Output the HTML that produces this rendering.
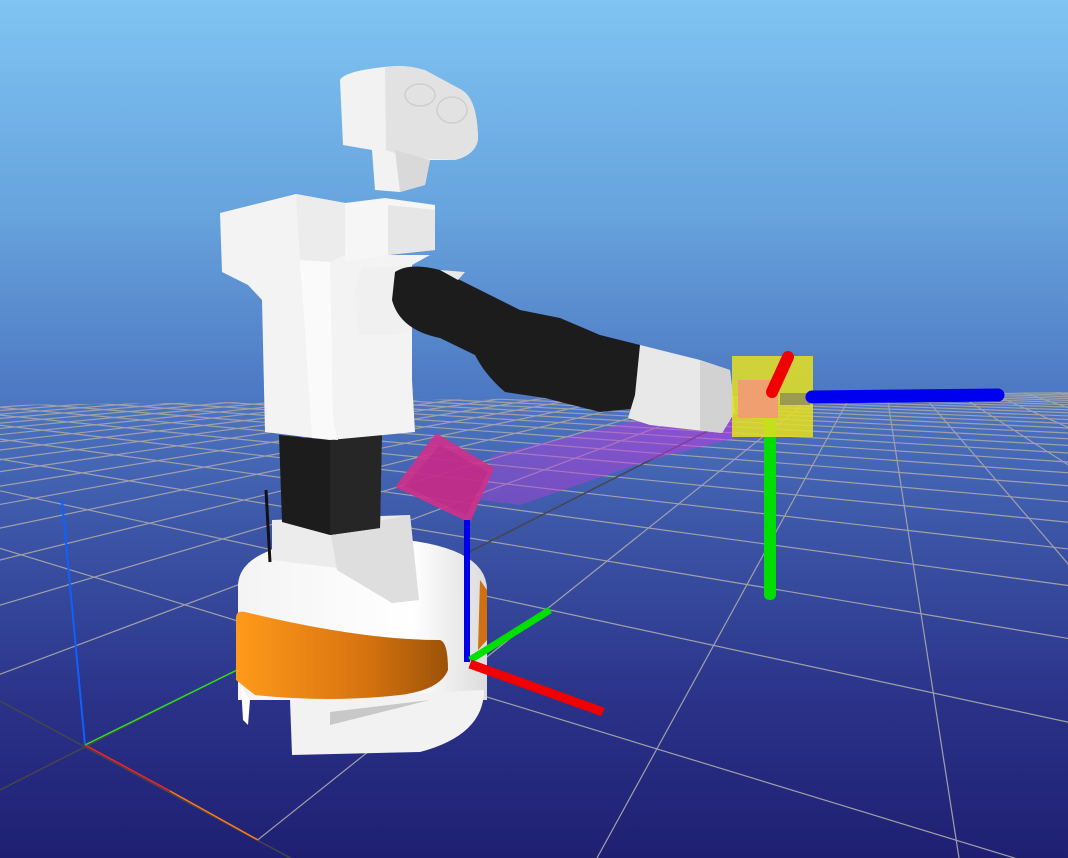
<!DOCTYPE html>
<html><head><meta charset="utf-8"><style>
html,body{margin:0;padding:0;width:1068px;height:858px;overflow:hidden;background:#3a5aa8}
svg{display:block;position:absolute;left:0;top:0}
</style></head><body>
<svg id="s" width="1068" height="858" viewBox="0 0 1068 858" xmlns="http://www.w3.org/2000/svg">
<defs>
<linearGradient id="bg" x1="0" y1="0" x2="0" y2="1">
<stop offset="0" stop-color="#7fc4f2"/>
<stop offset="0.25" stop-color="#67a3dd"/>
<stop offset="0.46" stop-color="#4d78c3"/>
<stop offset="0.62" stop-color="#3c55a6"/>
<stop offset="0.82" stop-color="#2a3288"/>
<stop offset="1" stop-color="#1f1f72"/>
</linearGradient>
<linearGradient id="org" x1="0" y1="0" x2="1" y2="0">
<stop offset="0" stop-color="#ff9a1a"/><stop offset="0.6" stop-color="#d87410"/><stop offset="1" stop-color="#9c5208"/>
</linearGradient>
<linearGradient id="wh" x1="0" y1="0" x2="1" y2="0">
<stop offset="0" stop-color="#f4f4f4"/><stop offset="0.7" stop-color="#ffffff"/><stop offset="1" stop-color="#dcdcdc"/>
</linearGradient>
<linearGradient id="haze" x1="0" y1="0" x2="1" y2="0">
<stop offset="0" stop-color="#b040d8" stop-opacity="0.75"/><stop offset="1" stop-color="#d030e8" stop-opacity="0.9"/>
</linearGradient>
<clipPath id="gc"><polygon points="0,405 1068,392 1068,858 292,858 0,701"/></clipPath>
<clipPath id="gc2"><polygon points="0,405 1068,392 1068,858 0,858"/></clipPath>
</defs>
<rect width="1068" height="858" fill="url(#bg)"/>
<g id="grid" clip-path="url(#gc)" stroke="#a0a0a8" stroke-width="1.2" fill="none"></g>
<g clip-path="url(#gc2)" stroke="#45454d" stroke-width="1.5">
<line x1="0" y1="790" x2="879" y2="344"/>
<line x1="0" y1="701" x2="320" y2="874"/>
</g>

<!-- world axes -->
<line x1="85" y1="745" x2="62" y2="500" stroke="#1060ff" stroke-width="2"/>
<line x1="85" y1="745" x2="237" y2="670" stroke="#30e020" stroke-width="1.5"/>
<line x1="85" y1="745" x2="170" y2="791" stroke="#ff2020" stroke-width="1.5"/>
<line x1="170" y1="791" x2="258" y2="840" stroke="#ff7a10" stroke-width="1.5"/>

<!-- purple haze -->
<polygon points="492,455 640,420 735,418 735,438 650,460 520,505 480,500" fill="url(#haze)" opacity="0.55"/>

<!-- base -->
<path d="M238,585 Q240,540 362,537 Q487,540 487,590 L487,700 L238,700 Z" fill="url(#wh)"/>
<path d="M290,700 L484,690 Q484,735 420,752 L292,755 Z" fill="#f2f2f2"/>
<path d="M330,725 L430,700 L330,712 Z" fill="#c8c8c8"/>
<path d="M236,618 Q236,610 245,612 Q360,640 440,640 Q448,642 448,670 Q440,690 400,695 Q330,703 255,695 L236,680 Z" fill="url(#org)"/>
<path d="M480,580 L487,590 L487,640 L478,650 Z" fill="#d07010"/>
<path d="M241,686 L250,700 L248,725 L243,720 Z" fill="#fff"/>
<polygon points="272,520 410,515 419,600 392,603 337,568 272,560" fill="#ececec"/>
<polygon points="330,530 410,515 419,600 392,603 337,570" fill="#dedede"/>
<line x1="266" y1="490" x2="270" y2="562" stroke="#111" stroke-width="3"/>

<!-- black column -->
<polygon points="279,435 330,440 382,428 380,528 330,535 282,522" fill="#1c1c1c"/>
<polygon points="330,440 382,428 380,528 330,535" fill="#262626"/>

<!-- torso -->
<path d="M220,213 L296,194 L345,203 L345,255 L430,255 L412,265 L412,380 L415,432 L330,440 L265,432 L262,300 L248,285 L222,272 Z" fill="#f3f3f3"/>
<path d="M296,194 L345,203 L345,255 L330,262 L300,260 Z" fill="#ececec"/>
<path d="M300,260 L330,262 L333,420 L338,440 L312,438 L305,330 Z" fill="#fafafa"/>
<path d="M345,203 L385,198 L435,205 L435,250 L388,255 L345,262 Z" fill="#f6f6f6"/>
<path d="M388,205 L435,210 L435,250 L388,255 Z" fill="#e6e6e6"/>
<!-- head -->
<path d="M340,80 Q345,70 395,66 L455,88 Q478,100 478,140 Q475,155 455,160 L430,160 L425,185 L400,192 L375,190 L372,150 L343,145 Z" fill="#f2f2f2"/>
<path d="M385,68 Q400,63 425,70 L462,90 Q478,100 478,140 Q475,155 455,160 L410,158 L386,150 Z" fill="#e2e2e2"/>
<ellipse cx="420" cy="95" rx="15" ry="11" fill="none" stroke="#cfcfcf" stroke-width="1.5"/>
<ellipse cx="452" cy="110" rx="15" ry="13" fill="none" stroke="#cfcfcf" stroke-width="1.5"/>
<path d="M395,150 L430,160 L425,185 L400,192 Z" fill="#d9d9d9"/>

<!-- shoulder / arm -->
<polygon points="362,268 410,265 412,330 395,335 358,335 355,290" fill="#f0f0f0"/>
<path d="M395,272 Q410,262 440,270 L470,285 L520,310 L560,318 L600,335 L640,345 L640,408 L600,412 L545,398 L505,392 Q485,375 475,355 L440,338 Q400,330 392,300 Z" fill="#1c1c1c"/>
<path d="M440,270 L465,272 L458,280 Z" fill="#e8e8e8"/>
<path d="M640,345 L700,360 L730,370 L735,412 L722,433 L650,425 L628,418 L635,395 Z" fill="#e8e8e8"/>
<path d="M700,360 L730,370 L735,412 L722,433 L700,430 Z" fill="#d2d2d2"/>

<!-- target frame -->
<rect x="764" y="410" width="12" height="190" rx="5" fill="#00dd00"/>
<rect x="732" y="356" width="81" height="81" fill="#e6e020" opacity="0.85"/>
<rect x="738" y="380" width="40" height="38" fill="#f0a070"/>
<rect x="780" y="393" width="30" height="12" fill="#9a9a50"/>
<line x1="812" y1="397" x2="998" y2="395" stroke="#0000f0" stroke-width="13" stroke-linecap="round"/>
<line x1="788" y1="357" x2="772" y2="392" stroke="#f00000" stroke-width="12" stroke-linecap="round"/>

<!-- magenta box -->
<polygon points="436,433 494,468 470,523 395,487" fill="#d0308a" opacity="0.9"/>
<polygon points="440,445 488,472 466,515 405,486" fill="#b8288a" opacity="0.5"/>

<!-- base axes -->
<line x1="467" y1="520" x2="467" y2="662" stroke="#0000e8" stroke-width="6"/>
<line x1="470" y1="660" x2="550" y2="610" stroke="#00e000" stroke-width="7"/>
<line x1="470" y1="664" x2="603" y2="712" stroke="#f00000" stroke-width="9"/>
</svg>
<script>
var g=document.getElementById('grid'),ns='http://www.w3.org/2000/svg';
function L(x1,y1,x2,y2){var l=document.createElementNS(ns,'line');l.setAttribute('x1',x1);l.setAttribute('y1',y1);l.setAttribute('x2',x2);l.setAttribute('y2',y2);g.appendChild(l);}
var gx=879,gy=344;
for(var k=-30;k<40;k++){if(k==0)continue;var bx=-127+362*k;L(gx,gy,gx+(bx-gx)*4,gy+(858-gy)*4);}
var rx=-650,ry=350;
for(var m=0;m<70;m++){var d=1/(0.00269+0.0011*m);var y=350+d;L(rx,ry,rx+(568-rx)*4,ry+(y-ry)*4);}
</script>
</body></html>
